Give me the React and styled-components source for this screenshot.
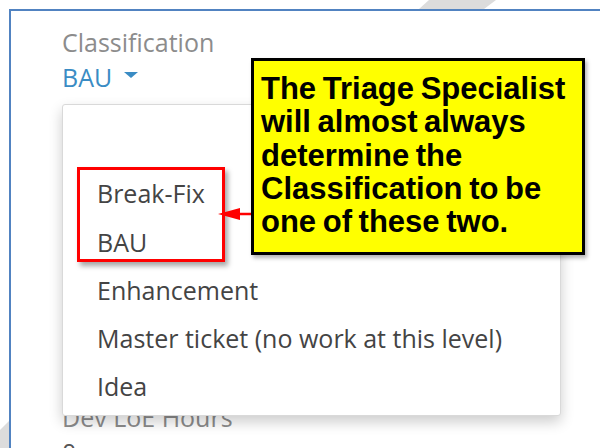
import React from 'react'
import styled, { createGlobalStyle } from 'styled-components'

const GlobalStyle = createGlobalStyle`
  body {
    margin: 0;
    background: #ffffff;
  }
`

const options = ['', 'Break-Fix', 'BAU', 'Enhancement', 'Master ticket (no work at this level)', 'Idea']

const App = () => {
    return (
        <StyledPage>
            <GlobalStyle />

            <StyledCorner viewBox="0 0 600 448" aria-hidden="true">
                <polygon points="419,9 429,0 496,0 484,9" />
                <polygon points="9,421 0,430 0,448 9,448" />
            </StyledCorner>

            <StyledFrame>
                <StyledForm>
                    <StyledField>
                        <StyledLabel>Classification</StyledLabel>
                        <StyledValue>
                            BAU <StyledCaret />
                        </StyledValue>
                    </StyledField>

                    <StyledField $gap="305px">
                        <StyledLabel>Dev LoE Hours</StyledLabel>
                        <StyledNumber>0</StyledNumber>
                    </StyledField>
                </StyledForm>
            </StyledFrame>

            <StyledMenu>
                {options.map((option, i) => (
                    <StyledItem key={i}>{option}</StyledItem>
                ))}
            </StyledMenu>

            <StyledHighlight />

            <StyledArrow viewBox="0 0 40 20" aria-hidden="true">
                <line x1="20" y1="10" x2="34" y2="10" />
                <polygon points="0,10 22,4 22,16" />
            </StyledArrow>

            <StyledNote>
                The Triage Specialist<br />
                will almost always<br />
                determine the<br />
                Classification to be<br />
                one of these two.
            </StyledNote>
        </StyledPage>
    )
}

const StyledPage = styled.div`
position:relative;
width:600px;
height:448px;
overflow:hidden;
background:#ffffff;
font-family:"Open Sans", "Liberation Sans", sans-serif;
`

const StyledCorner = styled.svg`
position:absolute;
left:0;
top:0;
width:600px;
height:448px;

polygon{
    fill:#dcdcdc;
}
`

const StyledFrame = styled.div`
margin:9px 0 0 9px;
height:439px;
border-top:2px solid #5183c1;
border-left:2px solid #5183c1;
box-sizing:border-box;
position:relative;
`

const StyledForm = styled.div`
padding:14px 0 0 51px;
display:flex;
flex-direction:column;
`

const StyledField = styled.div`
display:flex;
flex-direction:column;
margin-top:${props => props.$gap || '0'};
`

const StyledLabel = styled.div`
font-size:25px;
line-height:35px;
color:#8c8c8c;
`

const StyledValue = styled.div`
display:flex;
align-items:center;
gap:12px;
font-size:25px;
line-height:35px;
color:#3a8cc4;
`

const StyledCaret = styled.span`
width:0;
height:0;
margin-top:-6px;
border-left:7px solid transparent;
border-right:7px solid transparent;
border-top:6px solid #3a8cc4;
`

const StyledNumber = styled.div`
font-size:25px;
line-height:35px;
color:#555555;
`

const StyledMenu = styled.div`
position:absolute;
left:62px;
top:104px;
width:499px;
height:312px;
box-sizing:border-box;
padding:16px 0 0;
background:#ffffff;
border:1px solid #d9d9d9;
border-radius:3px;
box-shadow:0 6px 14px rgba(0,0,0,0.2);
display:flex;
flex-direction:column;
`

const StyledItem = styled.div`
height:48.3px;
line-height:48px;
padding-left:34px;
font-size:25px;
color:#444444;
white-space:nowrap;
`

const StyledHighlight = styled.div`
position:absolute;
left:77px;
top:167px;
width:148px;
height:95px;
box-sizing:border-box;
border:3px solid #ff0000;
box-shadow:3px 4px 5px rgba(0,0,0,0.35);
`

const StyledArrow = styled.svg`
position:absolute;
left:218px;
top:204px;
width:40px;
height:20px;

line{
    stroke:#ff0000;
    stroke-width:2.5;
}

polygon{
    fill:#ff0000;
}
`

const StyledNote = styled.div`
position:absolute;
left:251px;
top:58px;
width:334px;
height:197px;
box-sizing:border-box;
padding:11px 0 0 7px;
background:#ffff00;
border:3px solid #000000;
box-shadow:2px 3px 4px rgba(0,0,0,0.3);
font-family:"Liberation Sans", Arial, sans-serif;
font-weight:bold;
font-size:31px;
line-height:33.3px;
word-spacing:-2px;
color:#000000;
white-space:nowrap;
`

export default App
